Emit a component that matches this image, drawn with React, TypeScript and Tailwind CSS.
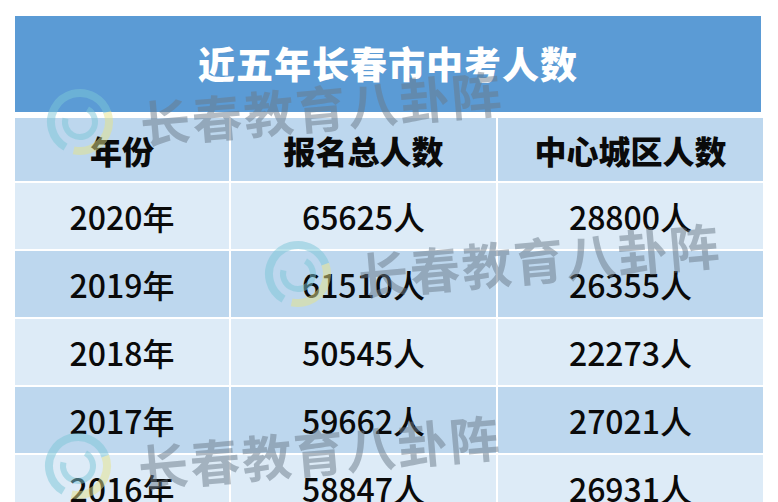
const rows = [
  { year: "2020年", total: "65625人", center: "28800人" },
  { year: "2019年", total: "61510人", center: "26355人" },
  { year: "2018年", total: "50545人", center: "22273人" },
  { year: "2017年", total: "59662人", center: "27021人" },
  { year: "2016年", total: "58847人", center: "26931人" },
];

const font = { fontFamily: '"Noto Sans CJK SC", "Noto Sans", sans-serif' };

const Logo = () => (
  <svg width="68" height="72" viewBox="0 0 68 72" aria-hidden>
    <circle cx="34" cy="36" r="29" fill="none" stroke="#7cc7d8" strokeWidth="8" strokeDasharray="112 70" transform="rotate(120 34 36)" />
    <circle cx="34" cy="36" r="29" fill="none" stroke="#e6e48a" strokeWidth="8" strokeDasharray="62 120" transform="rotate(-20 34 36)" />
    <circle cx="34" cy="36" r="15" fill="none" stroke="#7cc7d8" strokeWidth="6" strokeDasharray="66 28" transform="rotate(-60 34 36)" />
  </svg>
);

const Watermark = ({ className }: { className: string }) => (
  <div className={`pointer-events-none absolute flex items-center gap-[26px] opacity-50 ${className}`} aria-hidden>
    <Logo />
    <span className="text-[50px] font-bold leading-none tracking-[2px] text-[#6a7a89] -rotate-[5deg] origin-left" style={font}>
      长春教育八卦阵
    </span>
  </div>
);

const Cell = ({ children, className = "" }: { children: string; className?: string }) => (
  <div className={`flex items-center justify-center ${className}`}>{children}</div>
);

export default function App() {
  return (
    <div className="relative w-[778px] h-[502px] overflow-hidden bg-white pt-[16px] pl-[15px]" style={font}>
      <div className="flex flex-col w-[748px]">
        <div className="h-[96px] w-[746px] bg-[#5b9bd5] flex items-center justify-center text-white font-black text-[37px] tracking-[1px]">
          近五年长春市中考人数
        </div>
        <div className="mt-[6px] flex flex-col gap-[2px]">
          <div className="grid grid-cols-[214px_265px_265px] gap-x-[2px] h-[63px] text-[32px] font-black text-[#0a0a0a]">
            <Cell className="bg-[#bdd7ee]">年份</Cell>
            <Cell className="bg-[#bdd7ee]">报名总人数</Cell>
            <Cell className="bg-[#bdd7ee]">中心城区人数</Cell>
          </div>
          {rows.map((r, i) => {
            const bg = i % 2 === 0 ? "bg-[#ddebf7]" : "bg-[#bdd7ee]";
            return (
              <div key={r.year} className="grid grid-cols-[214px_265px_265px] gap-x-[2px] h-[66px] text-[32px] font-medium text-[#0a0a0a]">
                <Cell className={bg}>{r.year}</Cell>
                <Cell className={bg}>{r.total}</Cell>
                <Cell className={bg}>{r.center}</Cell>
              </div>
            );
          })}
        </div>
      </div>

      <Watermark className="left-[46px] top-[86px]" />
      <Watermark className="left-[264px] top-[238px]" />
      <Watermark className="left-[44px] top-[430px]" />
    </div>
  );
}
